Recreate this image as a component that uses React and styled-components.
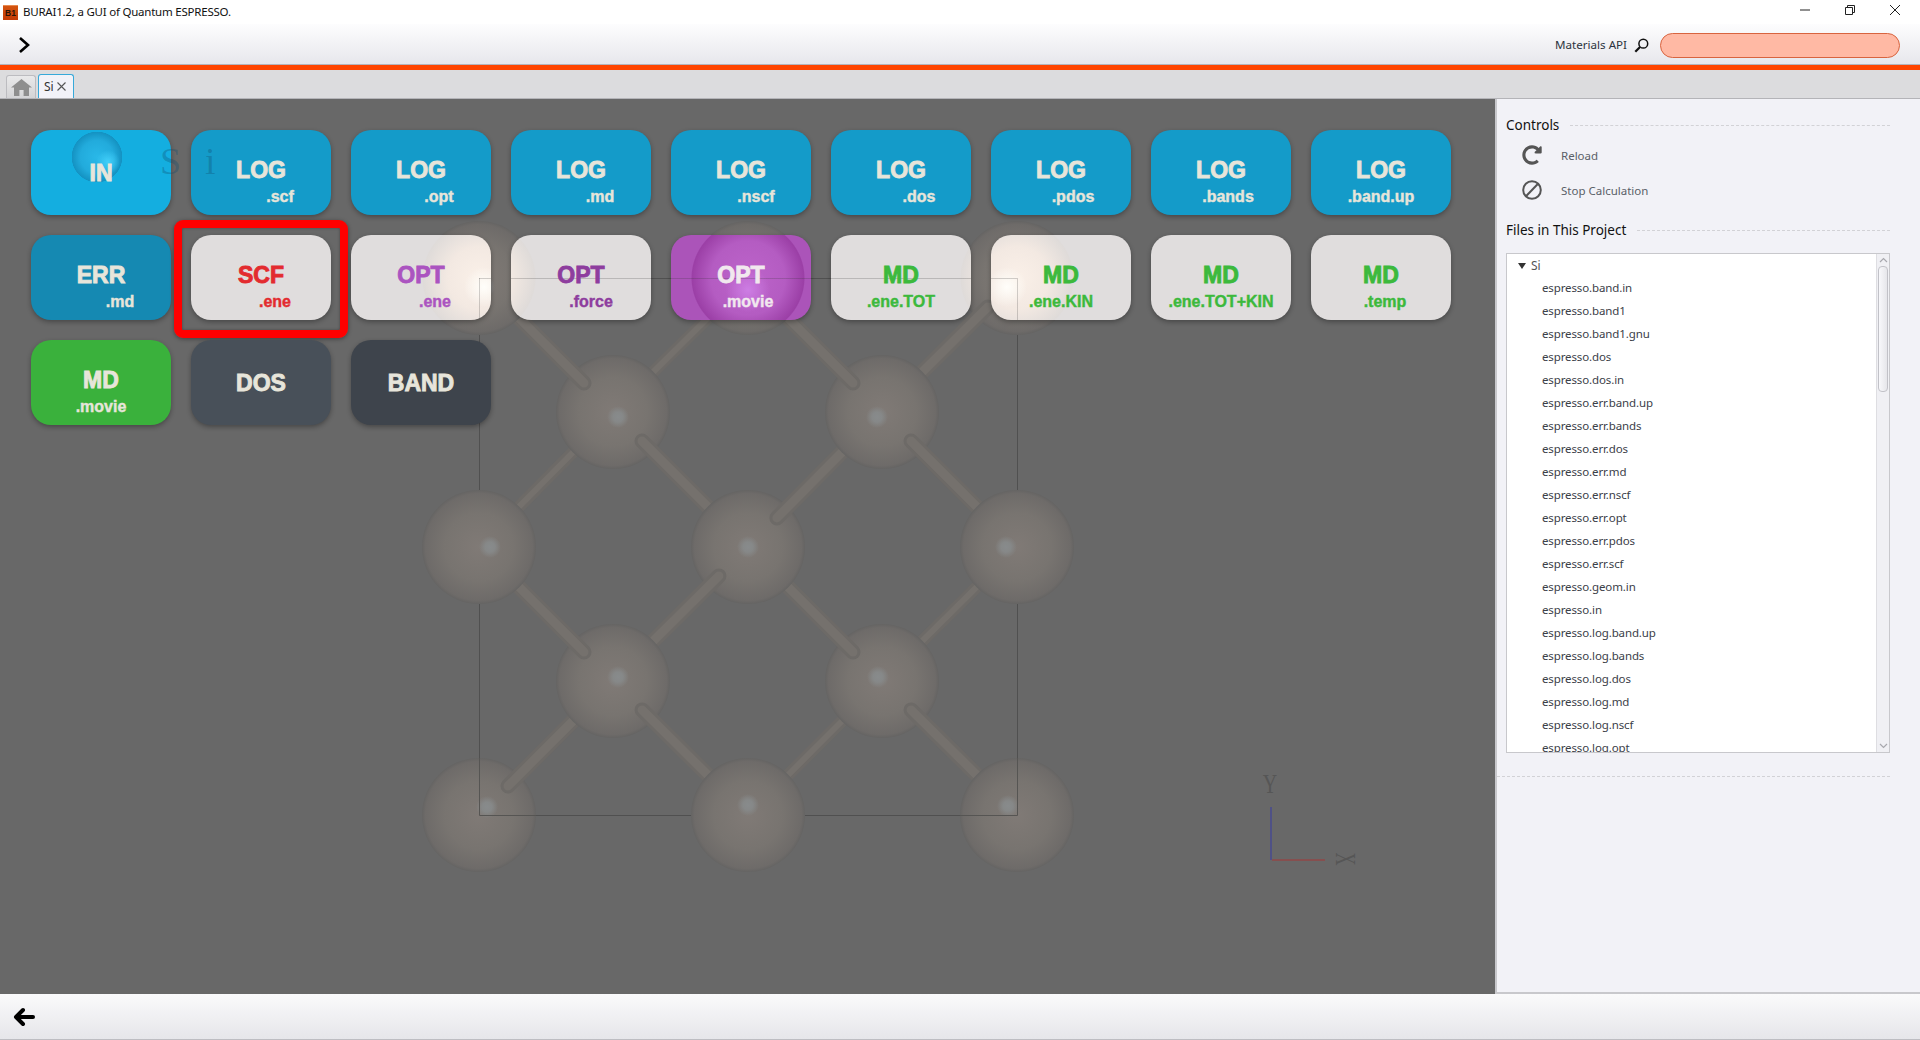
import React from 'react'
import styled, { createGlobalStyle } from 'styled-components'
import { FaRedoAlt } from 'react-icons/fa'

const UI_FONT = `"Noto Sans", "Open Sans", sans-serif`

const GlobalStyle = createGlobalStyle`
  html, body { margin: 0; padding: 0; background: #fff; }
  body { font-family: ${UI_FONT}; overflow: hidden; }
`

// atoms in paint order, each with the bonds that lie in front of it
const ATOMS = [
  { x: 613, y: 412, hx: 618, hy: 417, over: [[479, 278], [748, 547]] },
  { x: 882, y: 681, hx: 878, hy: 677, over: [[748, 547], [1017, 815]] },
  { x: 1017, y: 278, hx: 1007, hy: 287, over: [[882, 412]] },
  { x: 479, y: 815, hx: 487, hy: 807, over: [[613, 681]] },
  { x: 748, y: 547, hx: 748, hy: 547, over: [[882, 412], [613, 681]] },
  { x: 613, y: 681, hx: 618, hy: 677, over: [[479, 547], [748, 815]] },
  { x: 479, y: 547, hx: 490, hy: 547, over: [] },
  { x: 748, y: 815, hx: 748, hy: 805, over: [] },
  { x: 882, y: 412, hx: 877, hy: 417, over: [[748, 278], [1017, 547]] },
  { x: 748, y: 278, hx: 748, hy: 290, over: [] },
  { x: 479, y: 278, hx: 484, hy: 287, over: [] },
  { x: 1017, y: 547, hx: 1006, hy: 547, over: [] },
  { x: 1017, y: 815, hx: 1008, hy: 806, over: [] },
]

const BACK_BONDS = [
  [748, 278, 613, 412],
  [613, 412, 479, 547],
  [1017, 547, 882, 681],
  [882, 681, 748, 815],
]

const TOP_ATOMS = ATOMS.filter((a) => a.y === 278)

// what shows through the row of pale buttons: the cell box and the bright atoms
const glass = (col, purple) => {
  const ox = 31 + 160 * col
  const oy = 235
  const line = 'rgba(50,50,50,0.22)'
  const bar = (x, y, w, h) => `linear-gradient(${line},${line}) ${x}px ${y}px / ${w}px ${h}px no-repeat`
  const layers = []
  const left = Math.max(479, ox)
  const right = Math.min(1017, ox + 140)
  layers.push(bar(left - ox, 278 - oy, right - left, 1))
  ;[479, 1017].forEach((x) => {
    if (x >= ox && x < ox + 140) layers.push(bar(x - ox, 278 - oy, 1, 42))
  })
  TOP_ATOMS.forEach((a) => {
    if (a.x + 57 < ox || a.x - 57 > ox + 140) return
    const hi = purple ? 'rgba(205,125,228,1), rgba(205,125,228,0)' : 'rgba(255,254,250,1), rgba(255,250,240,0)'
    layers.push(`radial-gradient(circle ${purple ? 22 : 20}px at ${a.hx - ox}px ${a.hy - oy}px, ${hi})`)
    const stops = purple
      ? '#bd64ca 0%, #b45cc2 65%, #9b3fa6 98%'
      : '#faf0e8 0%, #f3e9e2 55%, #dfdbd9 98%'
    layers.push(`radial-gradient(circle 57px at ${a.x - ox}px ${a.y - oy}px, ${stops}, transparent 100%)`)
  })
  return layers.join(', ')
}

const inSphere = `
  radial-gradient(circle 12px at 77px 32px, #42d0fa, rgba(66,208,250,0)),
  radial-gradient(circle 25.5px at 66px 27px, #29b8e8 0%, #22abdc 65%, #1492c2 98%, transparent 100%)
`

const BLUE = '#149bc9'
const CREAM = '#e7e5da'
const PALE = '#e0dddd'
const GREEN = '#3cb93c'

const BUTTONS = [
  { title: 'IN', bg: '#14aee0', layers: inSphere },
  { title: 'LOG', sub: '.scf', shift: 19, bg: BLUE },
  { title: 'LOG', sub: '.opt', shift: 18, bg: BLUE },
  { title: 'LOG', sub: '.md', shift: 19, bg: BLUE },
  { title: 'LOG', sub: '.nscf', shift: 15, bg: BLUE },
  { title: 'LOG', sub: '.dos', shift: 18, bg: BLUE },
  { title: 'LOG', sub: '.pdos', shift: 12, bg: BLUE },
  { title: 'LOG', sub: '.bands', shift: 7, bg: BLUE },
  { title: 'LOG', sub: '.band.up', shift: 0, bg: BLUE },
  { title: 'ERR', sub: '.md', shift: 19, bg: '#1589b2' },
  { title: 'SCF', sub: '.ene', shift: 14, bg: PALE, color: '#e32b2f', marked: true },
  { title: 'OPT', sub: '.ene', shift: 14, bg: PALE, color: '#ab54c0', layers: glass(2) },
  { title: 'OPT', sub: '.force', shift: 10, bg: PALE, color: '#8e3d9e', layers: glass(3) },
  { title: 'OPT', sub: '.movie', shift: 7, bg: '#ab54b9', color: '#f1e8ee', layers: glass(4, true) },
  { title: 'MD', sub: '.ene.TOT', shift: 0, bg: PALE, color: GREEN, layers: glass(5) },
  { title: 'MD', sub: '.ene.KIN', shift: 0, bg: PALE, color: GREEN, layers: glass(6) },
  { title: 'MD', sub: '.ene.TOT+KIN', shift: 0, bg: PALE, color: GREEN },
  { title: 'MD', sub: '.temp', shift: 4, bg: PALE, color: GREEN },
  { title: 'MD', sub: '.movie', shift: 0, bg: '#3ab13c' },
  { title: 'DOS', bg: '#485059' },
  { title: 'BAND', bg: '#3e444c' },
]

const FILES = [
  'espresso.band.in', 'espresso.band1', 'espresso.band1.gnu', 'espresso.dos', 'espresso.dos.in',
  'espresso.err.band.up', 'espresso.err.bands', 'espresso.err.dos', 'espresso.err.md', 'espresso.err.nscf',
  'espresso.err.opt', 'espresso.err.pdos', 'espresso.err.scf', 'espresso.geom.in', 'espresso.in',
  'espresso.log.band.up', 'espresso.log.bands', 'espresso.log.dos', 'espresso.log.md', 'espresso.log.nscf',
  'espresso.log.opt',
]

const Bond = ({ from, to, width = 15 }) => (
  <g strokeLinecap="round">
    <line x1={from[0]} y1={from[1]} x2={to[0]} y2={to[1]} stroke="#6d6a67" strokeWidth={width} />
    <line x1={from[0]} y1={from[1]} x2={to[0]} y2={to[1]} stroke="#75716d" strokeWidth={width - 6} />
  </g>
)

// a bond in front of an atom stops at a rounded tip 41px short of the centre
const tipOf = (a, b) => {
  const dx = b[0] - a.x
  const dy = b[1] - a.y
  const len = Math.hypot(dx, dy)
  return [a.x + (dx / len) * 41, a.y + (dy / len) * 41]
}

const CrystalScene = () => (
  <Scene viewBox="0 99 1495 895">
    <defs>
      <radialGradient id="atom">
        <stop offset="0%" stopColor="#807a76" />
        <stop offset="60%" stopColor="#787470" />
        <stop offset="94%" stopColor="#6e6b69" />
        <stop offset="100%" stopColor="#656463" />
      </radialGradient>
      <radialGradient id="shine">
        <stop offset="0%" stopColor="#888b8c" />
        <stop offset="45%" stopColor="#868888" />
        <stop offset="100%" stopColor="#868888" stopOpacity="0" />
      </radialGradient>
    </defs>
    <rect x="479.5" y="278.5" width="538" height="537" fill="none" stroke="#505050" strokeWidth="1" />
    {BACK_BONDS.map((b, i) => (
      <Bond key={i} from={[b[0], b[1]]} to={[b[2], b[3]]} width={12} />
    ))}
    {ATOMS.map((a, i) => (
      <g key={i}>
        <circle cx={a.x} cy={a.y} r="57" fill="url(#atom)" />
        <circle cx={a.hx} cy={a.hy} r="11" fill="url(#shine)" />
        {a.over.map((b, j) => (
          <Bond key={j} from={tipOf(a, b)} to={b} />
        ))}
      </g>
    ))}
    {/* the cell box runs over the two front corner atoms */}
    <path d="M479.5 758V815.5H536M960 815.5H1017.5V758" fill="none" stroke="#565553" strokeWidth="1" />
    <path d="M1271 807V860" stroke="#4f5186" strokeWidth="2" />
    <path d="M1272 860H1325" stroke="#864f4f" strokeWidth="2" />
    <AxisLabel transform="translate(1270 793) scale(1 1.35)" textAnchor="middle">Y</AxisLabel>
    <AxisLabel transform="translate(1335.5 859) rotate(90) scale(0.9 1.46)" textAnchor="middle">X</AxisLabel>
  </Scene>
)

const App = () => {
  return (
    <Window>
      <GlobalStyle />
      <TitleBar>
        <TitleLeft>
          <AppBadge>B1</AppBadge>
          <TitleText>BURAI1.2, a GUI of Quantum ESPRESSO.</TitleText>
        </TitleLeft>
        <WindowButtons>
          <svg width="12" height="12" viewBox="0 0 12 12"><path d="M1 6H11" stroke="#222" strokeWidth="1" /></svg>
          <svg width="12" height="12" viewBox="0 0 12 12" fill="none" stroke="#222"><path d="M1.5 3.5H8.5V10.5H1.5Z" /><path d="M3.5 3.5V1.5H10.5V8.5H8.5" /></svg>
          <svg width="12" height="12" viewBox="0 0 12 12"><path d="M1 1L11 11M11 1L1 11" stroke="#222" strokeWidth="1" /></svg>
        </WindowButtons>
      </TitleBar>

      <Toolbar>
        <svg width="14" height="18" viewBox="0 0 14 18" fill="none">
          <path d="M3 2L11 9L3 16" stroke="#000" strokeWidth="2.6" />
        </svg>
        <SearchArea>
          <SearchLabel>Materials API</SearchLabel>
          <svg width="15" height="15" viewBox="0 0 15 15" fill="none" stroke="#111">
            <circle cx="9.3" cy="5.7" r="4.4" strokeWidth="1.5" />
            <path d="M6 9L1.3 13.7" strokeWidth="2.2" />
          </svg>
          <SearchField />
        </SearchArea>
      </Toolbar>
      <AccentLine />

      <TabBar>
        <HomeTab>
          <svg width="21" height="17" viewBox="0 0 21 17" fill="#8e8e8e">
            <path d="M10.5 0L21 8.6H18V17H12.6V11H8.4V17H3V8.6H0Z" />
          </svg>
        </HomeTab>
        <ProjectTab>
          Si
          <svg width="9" height="9" viewBox="0 0 9 9"><path d="M0.5 0.5L8.5 8.5M8.5 0.5L0.5 8.5" stroke="#555" strokeWidth="1.1" /></svg>
        </ProjectTab>
      </TabBar>

      <Middle>
        <Canvas>
          <CrystalScene />
          <ButtonGrid>
            {BUTTONS.map((b, i) => (
              <ActionButton key={i} $bg={b.bg} $color={b.color} $layers={b.layers} $double={Boolean(b.sub)}>
                <ButtonTitle>{b.title}</ButtonTitle>
                {b.sub && <ButtonSub $shift={b.shift}>{b.sub}</ButtonSub>}
                {b.marked && <RedFrame />}
              </ActionButton>
            ))}
          </ButtonGrid>
          <SceneLetter $left={160}>S</SceneLetter>
          <SceneLetter $left={205}>i</SceneLetter>
        </Canvas>

        <SidePanel>
          <SectionHead>
            <SectionName>Controls</SectionName>
            <DashedRule />
          </SectionHead>
          <ControlRow>
            <FaRedoAlt size={20} color="#555" />
            <ControlLabel>Reload</ControlLabel>
          </ControlRow>
          <ControlRow>
            <svg width="20" height="20" viewBox="0 0 20 20" fill="none" stroke="#555" strokeWidth="2">
              <circle cx="10" cy="10" r="8.8" />
              <path d="M15.8 4L4.2 16" />
            </svg>
            <ControlLabel>Stop Calculation</ControlLabel>
          </ControlRow>
          <FilesHead>
            <SectionName>Files in This Project</SectionName>
            <DashedRule />
          </FilesHead>
          <TreeBox>
            <TreeList>
              <RootRow>
                <Triangle />
                Si
              </RootRow>
              {FILES.map((f) => (
                <FileRow key={f}>{f}</FileRow>
              ))}
            </TreeList>
            <ScrollBar>
              <ScrollArrow>
                <svg width="9" height="6" viewBox="0 0 9 6" fill="none"><path d="M1 5L4.5 1.5L8 5" stroke="#a8a8ae" strokeWidth="1.2" /></svg>
              </ScrollArrow>
              <ScrollTrack>
                <ScrollThumb />
              </ScrollTrack>
              <ScrollArrow>
                <svg width="9" height="6" viewBox="0 0 9 6" fill="none"><path d="M1 1L4.5 4.5L8 1" stroke="#a8a8ae" strokeWidth="1.2" /></svg>
              </ScrollArrow>
            </ScrollBar>
          </TreeBox>
          <BottomRule />
        </SidePanel>
      </Middle>

      <Footer>
        <svg width="22" height="20" viewBox="0 0 22 20" fill="none" stroke="#000" strokeWidth="4" strokeLinecap="round" strokeLinejoin="round">
          <path d="M10 3L3 10L10 17" />
          <path d="M4 10H20" />
        </svg>
      </Footer>
    </Window>
  )
}

const Window = styled.div`
  width: 1920px;
  height: 1040px;
  display: flex;
  flex-direction: column;
  overflow: hidden;
  background: #fff;
`

const TitleBar = styled.div`
  height: 24px;
  flex: none;
  display: flex;
  align-items: center;
  justify-content: space-between;
  background: #fff;
`

const TitleLeft = styled.div`
  display: flex;
  align-items: center;
  gap: 5px;
  padding-left: 3px;
`

const AppBadge = styled.div`
  width: 15px;
  height: 14px;
  display: flex;
  align-items: center;
  justify-content: center;
  background: linear-gradient(#d4540f, #c23a06);
  border-top: 1px solid #e88a50;
  color: #2a1408;
  font-family: "Liberation Sans", sans-serif;
  font-size: 8.5px;
  font-weight: bold;
`

const TitleText = styled.span`
  font-size: 11.5px;
  letter-spacing: -0.22px;
  margin-top: -2px;
  color: #111;
  white-space: nowrap;
`

const WindowButtons = styled.div`
  display: flex;
  align-items: center;
  gap: 33px;
  padding-right: 19px;
  margin-top: -5px;
`

const Toolbar = styled.div`
  height: 40px;
  flex: none;
  box-sizing: border-box;
  display: flex;
  align-items: center;
  justify-content: space-between;
  padding: 2px 20px 0 17px;
  background: linear-gradient(#fdfdfe, #e7e7ec);
`

const SearchArea = styled.div`
  display: flex;
  align-items: center;
`

const SearchLabel = styled.span`
  font-size: 11.6px;
  margin-top: -2px;
  color: #2c3440;
  margin-right: 7px;
`

const SearchField = styled.div`
  width: 240px;
  height: 25px;
  box-sizing: border-box;
  margin-left: 11px;
  background: #ffb9a4;
  border: 1px solid #d8643f;
  border-radius: 13px;
`

const AccentLine = styled.div`
  height: 6px;
  flex: none;
  box-sizing: border-box;
  border-top: 1px solid #b4b4bc;
  background: #ff4500;
`

const TabBar = styled.div`
  height: 29px;
  flex: none;
  box-sizing: border-box;
  display: flex;
  align-items: flex-end;
  gap: 2px;
  padding-left: 6px;
  background: #dcdcde;
  border-bottom: 1px solid #b4b4b8;
`

const HomeTab = styled.div`
  width: 30px;
  height: 23px;
  box-sizing: border-box;
  display: flex;
  align-items: center;
  justify-content: center;
  background: linear-gradient(#e9e9ea, #d4d4d6);
  border: 1px solid #bcbcc0;
  border-bottom: none;
  border-radius: 3px 3px 0 0;
`

const ProjectTab = styled.div`
  width: 36px;
  height: 24px;
  box-sizing: border-box;
  display: flex;
  align-items: center;
  gap: 3px;
  padding-left: 5px;
  font-size: 12px;
  color: #333;
  background: #f2f2f8;
  border: 1px solid #37a9d9;
  border-bottom: none;
  border-radius: 3px 3px 0 0;
`

const Middle = styled.div`
  flex: 1;
  min-height: 0;
  display: flex;
`

const Canvas = styled.div`
  position: relative;
  width: 1495px;
  flex: none;
  box-sizing: border-box;
  padding: 31px 0 0 31px;
  background: #686868;
  overflow: hidden;
`

const Scene = styled.svg`
  position: absolute;
  left: 0;
  top: 0;
  width: 1495px;
  height: 895px;
`

const AxisLabel = styled.text`
  font-family: "Liberation Serif", serif;
  font-size: 20px;
  fill: #565656;
`

const SceneLetter = styled.span`
  position: absolute;
  top: 40px;
  left: ${(p) => p.$left}px;
  font-family: "Liberation Serif", serif;
  font-size: 38px;
  line-height: 44px;
  color: rgba(15, 75, 110, 0.32);
`

const ButtonGrid = styled.div`
  position: relative;
  display: grid;
  grid-template-columns: repeat(9, 140px);
  grid-auto-rows: 85px;
  gap: 20px;
`

const ActionButton = styled.div`
  position: relative;
  display: flex;
  flex-direction: column;
  align-items: center;
  justify-content: ${(p) => (p.$double ? 'flex-start' : 'center')};
  padding-top: ${(p) => (p.$double ? '27px' : '0')};
  box-sizing: border-box;
  border-radius: 20px;
  background-color: ${(p) => p.$bg};
  ${(p) => (p.$layers ? `background: ${p.$layers}, ${p.$bg};` : '')}
  box-shadow: 0 2px 5px rgba(0, 0, 0, 0.32);
  color: ${(p) => p.$color || CREAM};
  font-family: "Liberation Sans", Arial, sans-serif;
  font-weight: bold;
`

const ButtonTitle = styled.div`
  font-size: 23px;
  line-height: 26px;
  -webkit-text-stroke: 0.9px currentColor;
`

const ButtonSub = styled.div`
  margin-top: 4px;
  font-size: 16px;
  line-height: 20px;
  white-space: nowrap;
  padding-left: ${(p) => p.$shift * 2}px;
  -webkit-text-stroke: 0.4px currentColor;
`

const RedFrame = styled.div`
  position: absolute;
  top: -15px;
  left: -17px;
  width: 174px;
  height: 118px;
  box-sizing: border-box;
  border: 8px solid #ff0000;
  border-radius: 9px;
  box-shadow: 0 1px 4px rgba(0, 0, 0, 0.4), inset 0 0 3px rgba(0, 0, 0, 0.35);
`

const SidePanel = styled.div`
  flex: 1;
  box-sizing: border-box;
  padding: 16px 30px 0 0;
  background: #f2f2f7;
  border-left: 2px solid #c8c8cc;
  border-bottom: 2px solid #c8c8cc;
`

const SectionHead = styled.div`
  display: flex;
  align-items: center;
  gap: 11px;
  height: 20px;
  margin-left: 9px;
`

const FilesHead = styled(SectionHead)`
  margin-top: 20px;
`

const SectionName = styled.span`
  font-size: 13.5px;
  margin-top: -1px;
  color: #111;
  white-space: nowrap;
`

const DashedRule = styled.div`
  flex: 1;
  border-top: 1px dashed #d2d2d6;
`

const ControlRow = styled.div`
  display: flex;
  align-items: center;
  gap: 19px;
  height: 20px;
  margin: 10px 0 0 25px;
  & + & {
    margin-top: 15px;
  }
`

const ControlLabel = styled.span`
  font-size: 11.5px;
  color: #5a5f68;
`

const TreeBox = styled.div`
  display: flex;
  height: 500px;
  box-sizing: border-box;
  margin: 13px 0 0 9px;
  background: #fff;
  border: 1.5px solid #c8c8cc;
  overflow: hidden;
`

const TreeList = styled.div`
  flex: 1;
  overflow: hidden;
`

const RootRow = styled.div`
  height: 23px;
  display: flex;
  align-items: center;
  padding-left: 11px;
  font-size: 12px;
  color: #555;
`

const Triangle = styled.span`
  width: 0;
  height: 0;
  margin-right: 5px;
  border-left: 4px solid transparent;
  border-right: 4px solid transparent;
  border-top: 6px solid #333;
`

const FileRow = styled.div`
  height: 23px;
  line-height: 22px;
  padding-left: 35px;
  font-size: 11.5px;
  letter-spacing: -0.12px;
  color: #3b4048;
  white-space: nowrap;
`

const ScrollBar = styled.div`
  width: 12px;
  flex: none;
  display: flex;
  flex-direction: column;
  background: #f0f0f4;
  border-left: 1px solid #dedee2;
`

const ScrollArrow = styled.div`
  height: 12px;
  flex: none;
  display: flex;
  align-items: center;
  justify-content: center;
`

const ScrollTrack = styled.div`
  flex: 1;
  padding: 0 1px;
`

const ScrollThumb = styled.div`
  height: 126px;
  box-sizing: border-box;
  background: linear-gradient(90deg, #f8f8fb, #e6e6ea);
  border: 1px solid #c2c2c8;
  border-radius: 4px;
`

const BottomRule = styled.div`
  margin-top: 23px;
  border-top: 1px dashed #d2d2d6;
`

const Footer = styled.div`
  height: 46px;
  flex: none;
  box-sizing: border-box;
  display: flex;
  align-items: center;
  padding: 0 0 0 13px;
  background: linear-gradient(#fafafb, #e6e6ea);
  border-bottom: 1px solid #bdbdc2;
`

export default App
